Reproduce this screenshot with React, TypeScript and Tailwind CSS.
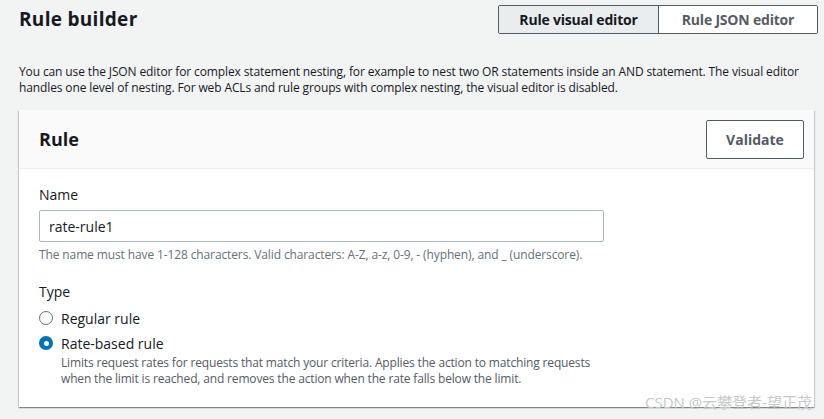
import React from 'react';

const font = { fontFamily: '"Open Sans", "Noto Sans CJK SC", sans-serif' };

function Radio({ checked }: { checked?: boolean }) {
  if (checked) {
    return (
      <span className="flex h-[14px] w-[14px] shrink-0 items-center justify-center rounded-full bg-[#0073bb]">
        <span className="h-[5px] w-[5px] rounded-full bg-white" />
      </span>
    );
  }
  return <span className="h-[14px] w-[14px] shrink-0 rounded-full border-[1.5px] border-[#687078] bg-white" />;
}

export default function App() {
  return (
    <div className="relative h-[419px] w-[824px] overflow-hidden bg-[#f2f3f3] px-[19px] text-[#16191f]" style={font}>
      <div className="-mr-[13px] flex h-[35px] items-center justify-between pt-[3px]">
        <h2 className="text-[19px] font-bold leading-[22px] tracking-[0.3px]">Rule builder</h2>
        <div className="flex h-[29px] overflow-hidden rounded-[2px] border border-[#545b64] text-[14px] font-bold">
          <button className="w-[160px] border-r border-[#545b64] bg-[#eaeded] tracking-[-0.2px] text-[#16191f]">Rule visual editor</button>
          <button className="w-[158px] bg-white tracking-[-0.2px] text-[#545b64]">Rule JSON editor</button>
        </div>
      </div>

      <p className="mt-[29px] text-[12px] leading-[16px] tracking-[-0.12px] text-[#16191f]">
        You can use the JSON editor for complex statement nesting, for example to nest two OR statements inside an AND statement. The visual editor
        <br />
        handles one level of nesting. For web ACLs and rule groups with complex nesting, the visual editor is disabled.
      </p>

      <div className="mt-[14px] w-[795px] bg-white shadow-[0_1px_1px_0_rgba(0,28,36,0.3),1px_1px_1px_0_rgba(0,28,36,0.15),-1px_1px_1px_0_rgba(0,28,36,0.15)]">
        <div className="flex h-[59px] items-center justify-between border-b border-[#eaeded] bg-[#fafafa] pl-5 pr-[10px]">
          <h3 className="text-[18px] font-bold leading-[22px]">Rule</h3>
          <button className="h-[39px] w-[98px] rounded-[2px] border border-[#545b64] bg-white text-[14px] font-bold text-[#545b64]">Validate</button>
        </div>

        <div className="px-5 pb-[20px] pt-[16px]">
          <label className="block text-[14px] leading-[20px]">Name</label>
          <div className="mt-[5px] flex h-[32px] w-[565px] items-center rounded-[2px] border border-[#aab7b8] px-[9px] text-[14px]">
            rate-rule1
          </div>
          <p className="mt-[5px] text-[12px] leading-[16px] tracking-[-0.12px] text-[#687078]">
            The name must have 1-128 characters. Valid characters: A-Z, a-z, 0-9, - (hyphen), and _ (underscore).
          </p>

          <div className="mt-[19px] text-[14px] leading-[20px]">Type</div>
          <div className="mt-[6px] flex h-[20px] items-center gap-[8px] text-[14px]">
            <Radio />
            <span>Regular rule</span>
          </div>
          <div className="mt-[5px] flex h-[20px] items-center gap-[8px] text-[14px]">
            <Radio checked />
            <span>Rate-based rule</span>
          </div>
          <p className="ml-[22px] mt-[2px] text-[12px] leading-[16px] tracking-[-0.16px] text-[#545b64]">
            Limits request rates for requests that match your criteria. Applies the action to matching requests
            <br />
            when the limit is reached, and removes the action when the rate falls below the limit.
          </p>
        </div>
      </div>

      <span className="absolute left-[645px] top-[393px] text-[15px] leading-[18px] text-[#c8c8c8]">CSDN @云攀登者-望正茂</span>
    </div>
  );
}
